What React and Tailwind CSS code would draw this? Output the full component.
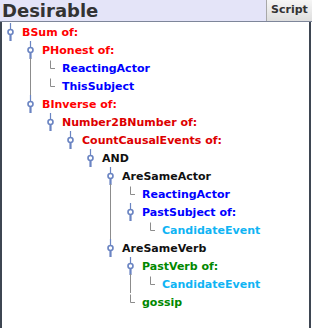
const RED = 'text-[#ff0000]';
const DARKRED = 'text-[#dd0000]';
const BLUE = 'text-[#0000ff]';
const CYAN = 'text-[#10b4f4]';
const GREEN = 'text-[#008800]';
const BLACK = 'text-[#111111]';

const TREE = {
  label: 'BSum of:',
  color: RED,
  children: [
    {
      label: 'PHonest of:',
      color: RED,
      children: [
        { label: 'ReactingActor', color: BLUE },
        { label: 'ThisSubject', color: BLUE },
      ],
    },
    {
      label: 'BInverse of:',
      color: RED,
      children: [
        {
          label: 'Number2BNumber of:',
          color: DARKRED,
          children: [
            {
              label: 'CountCausalEvents of:',
              color: DARKRED,
              children: [
                {
                  label: 'AND',
                  color: BLACK,
                  children: [
                    {
                      label: 'AreSameActor',
                      color: BLACK,
                      children: [
                        { label: 'ReactingActor', color: BLUE },
                        {
                          label: 'PastSubject of:',
                          color: BLUE,
                          children: [{ label: 'CandidateEvent', color: CYAN }],
                        },
                      ],
                    },
                    {
                      label: 'AreSameVerb',
                      color: BLACK,
                      children: [
                        {
                          label: 'PastVerb of:',
                          color: GREEN,
                          children: [{ label: 'CandidateEvent', color: CYAN }],
                        },
                        { label: 'gossip', color: GREEN },
                      ],
                    },
                  ],
                },
              ],
            },
          ],
        },
      ],
    },
  ],
};

// collapse handle: thin stem, ring, thick stem
function Handle() {
  return (
    <svg width="10" height="18" viewBox="0 0 10 18" className="shrink-0">
      <line x1="5.5" y1="0" x2="5.5" y2="6.5" stroke="#6a84c2" strokeWidth="1.2" />
      <circle cx="5.5" cy="9" r="2.5" fill="#ffffff" stroke="#6a84c2" strokeWidth="1.6" />
      <rect x="4.4" y="11.2" width="2.2" height="6.8" fill="#6a84c2" />
    </svg>
  );
}

// leaf connector
function Elbow() {
  return (
    <svg width="10" height="18" viewBox="0 0 10 18" className="shrink-0">
      <path d="M5.5 1.5 V9.5 H11" fill="none" stroke="#8c8c8c" strokeWidth="1" />
    </svg>
  );
}

function Node({ node, hasNext }) {
  const leaf = !node.children;
  return (
    <div className="relative">
      {hasNext && !leaf && (
        <span className="absolute left-[5px] top-[17px] bottom-0 w-px bg-[#8c8c8c]" />
      )}
      <div className="flex items-center h-[18px]">
        {leaf ? <Elbow /> : <Handle />}
        <span className={`ml-[7px] font-bold text-[11px] leading-none whitespace-nowrap ${node.color}`}>
          {node.label}
        </span>
      </div>
      {!leaf && (
        <div className="pl-[20px]">
          {node.children.map((c, i) => (
            <Node key={i} node={c} hasNext={i < node.children.length - 1} />
          ))}
        </div>
      )}
    </div>
  );
}

export default function App() {
  return (
    <div className="w-[312px] h-[328px] bg-white flex flex-col overflow-hidden" style={{ fontFamily: '"DejaVu Sans", sans-serif' }}>
      <div className="flex h-[22px] shrink-0 bg-[#e4e4f8] border-b border-[#7e869a]">
        <div className="flex-1 pl-[2px] text-[18px] leading-[21px] font-bold text-[#333333]">Desirable</div>
        <div className="w-[46px] flex items-center justify-center border-l border-[#a8a8a8] bg-gradient-to-b from-[#f6f6f6] to-[#dedede] text-[11px] font-bold text-[#333333]">
          Script
        </div>
      </div>
      <div className="flex-1 w-[311px] border-l-2 border-r-2 border-[#3e4652] pl-[3px] pt-px">
        <Node node={TREE} hasNext={false} />
      </div>
    </div>
  );
}
